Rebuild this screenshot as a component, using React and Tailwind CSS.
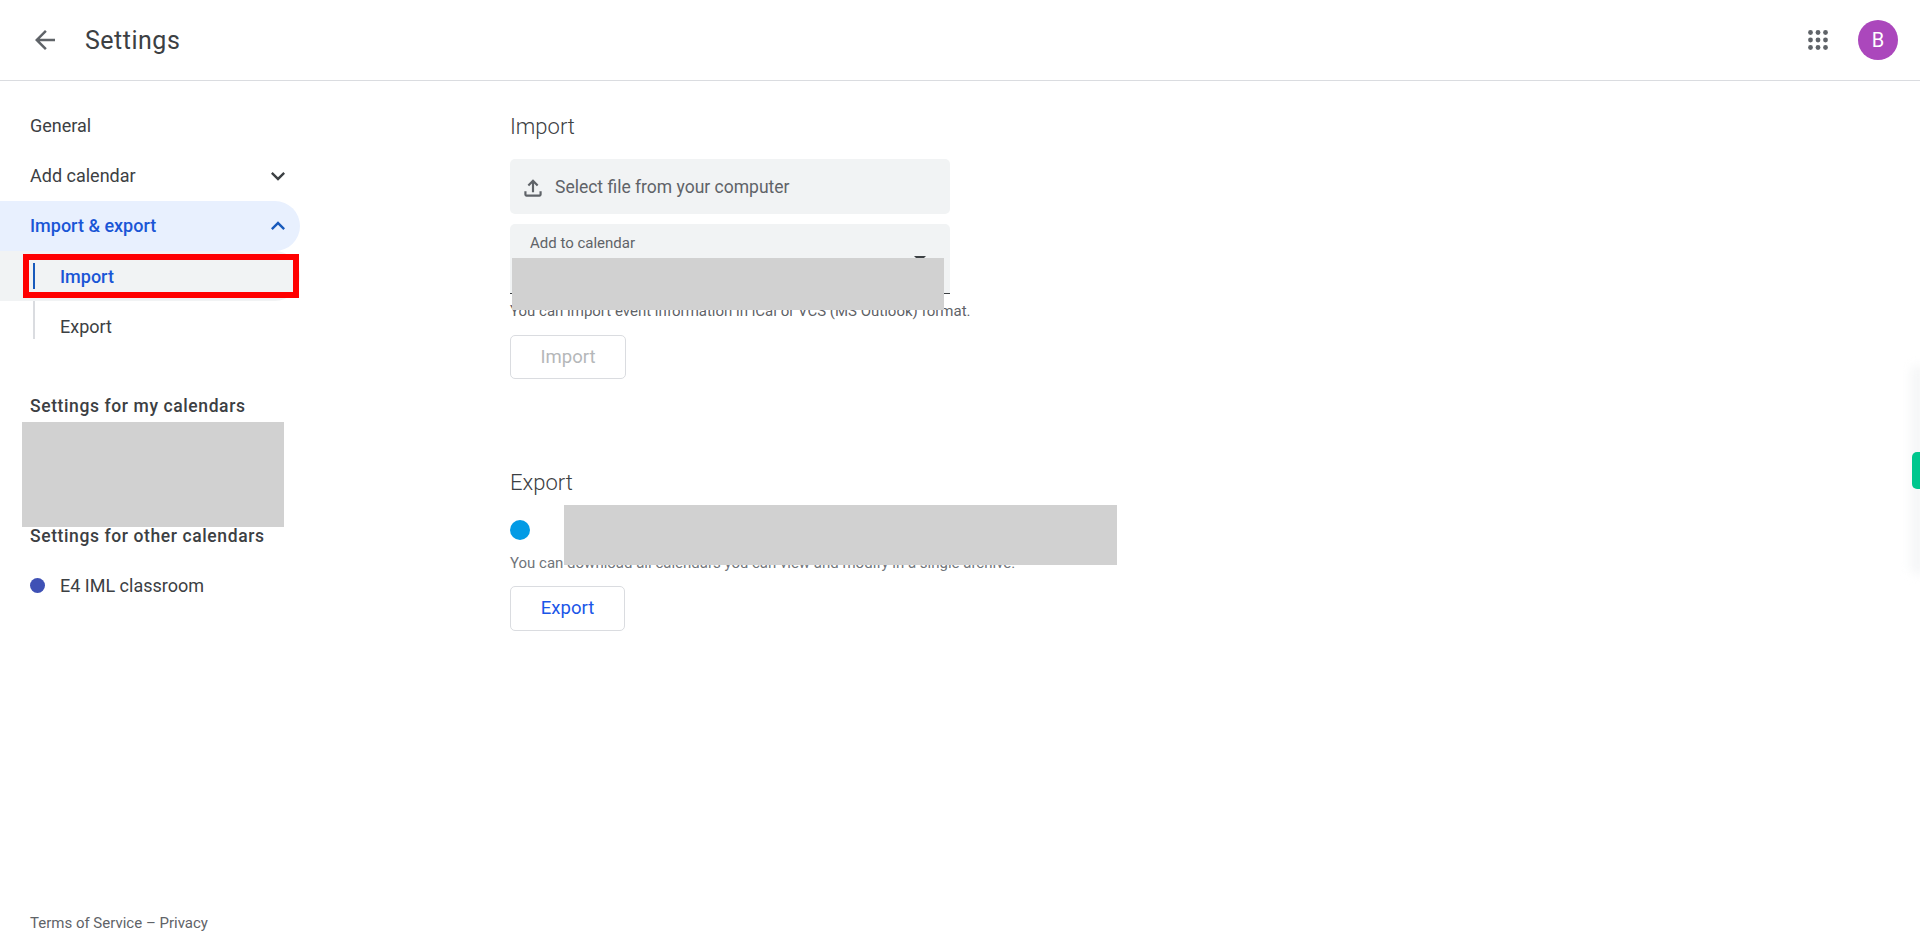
const ROBOTO = "font-['Roboto',sans-serif]";

function Chevron({ up }) {
  return (
    <svg viewBox="0 0 24 24" className={up ? 'w-7 h-7 fill-[#185abc] rotate-180' : 'w-7 h-7 fill-[#3c4043]'}>
      <path d="M7.41 8.59 12 13.17l4.59-4.58L18 10l-6 6-6-6z" />
    </svg>
  );
}

function AppsIcon() {
  const pos = [2.5, 10, 17.5];
  return (
    <svg viewBox="0 0 20 20" className="w-5 h-5 fill-[#5f6368]">
      {pos.map((y) => pos.map((x) => <circle key={x + '-' + y} cx={x} cy={y} r="2.4" />))}
    </svg>
  );
}

function Sidebar() {
  return (
    <aside className="w-[300px] shrink-0 pt-5 flex flex-col text-[18px] text-[#3c4043]">
      <div className="h-[50px] pl-[30px] pb-[2px] flex items-center">General</div>
      <div className="h-[50px] pl-[30px] pr-[8px] flex items-center justify-between">
        <span className="pb-[2px]">Add calendar</span>
        <Chevron />
      </div>
      <div className="h-[50px] pl-[30px] pr-[8px] flex items-center justify-between bg-[#e8f0fe] rounded-r-[25px] text-[#1a56d6] font-medium">
        <span className="pb-[2px]">Import &amp; export</span>
        <Chevron up />
      </div>
      <div className="h-[50px] pl-[60px] flex items-center bg-[#f1f3f4] rounded-r-[25px] text-[#1a56d6] font-medium relative">
        <span>Import</span>
        <div className="absolute left-[33px] top-[12px] w-[2px] h-[26px] bg-[#185abc]" />
      </div>
      <div className="h-[50px] pl-[60px] flex items-center relative">
        <span>Export</span>
        <div className="absolute left-[33px] top-0 w-[2px] h-[38px] bg-[#dadce0]" />
      </div>
      <div className="h-[50px] mt-[30px] pl-[30px] flex items-center text-[17.5px] font-medium tracking-[0.6px]">Settings for my calendars</div>
      <div className="h-[80px]" />
      <div className="h-[50px] pl-[30px] flex items-center text-[17.5px] font-medium tracking-[0.6px]">Settings for other calendars</div>
      <div className="h-[50px] pl-[30px] pb-[1px] flex items-center gap-[15px]">
        <span className="w-[15px] h-[15px] rounded-full bg-[#3f51b5]" />
        <span>E4 IML classroom</span>
      </div>
    </aside>
  );
}

function Main() {
  return (
    <main className="pl-[210px] pt-[26px] flex flex-col items-start">
      <h2 className="h-[40px] flex items-center text-[22px] font-light text-[#3c4043] leading-none">Import</h2>
      <div className="mt-[12px] w-[440px] h-[55px] pt-[2px] bg-[#f1f3f4] rounded-[5px] flex items-center pl-[10px] gap-[9px] text-[#5f6368] text-[17.5px]">
        <svg viewBox="0 0 24 24" className="w-[26px] h-[26px] fill-[#5f6368]">
          <path d="M18 15v3H6v-3H4v3c0 1.1.9 2 2 2h12c1.1 0 2-.9 2-2v-3h-2zM7 9l1.41 1.41L11 7.83V16h2V7.83l2.59 2.58L17 9l-5-5-5 5z" />
        </svg>
        <span>Select file from your computer</span>
      </div>
      <div className="mt-[10px] w-[440px] h-[70px] bg-[#f1f3f4] rounded-t-[5px] border-b border-[#3c4043] pl-5 pr-6 pt-[10px] flex justify-between text-[#5f6368] text-[15px]">
        <span className="leading-[18px]">Add to calendar</span>
        <span className="mt-[22px] w-0 h-0 border-x-[6px] border-x-transparent border-t-[6px] border-t-[#3c4043]" />
      </div>
      <p className="mt-[8px] text-[15px] leading-[18px] text-[#5f6368]">You can import event information in iCal or VCS (MS Outlook) format.</p>
      <button className="mt-[15px] w-[116px] h-[44px] pt-[2px] bg-white border border-[#dadce0] rounded-[5px] text-[18.5px] text-[#b5b7b9]">Import</button>

      <h2 className="mt-[84px] h-[40px] flex items-center text-[22px] font-light text-[#3c4043] leading-none">Export</h2>
      <div className="mt-[17px] h-[20px] w-5 rounded-full bg-[#039be5]" />
      <p className="mt-[14px] text-[15px] leading-[18px] text-[#70757a]">You can download all calendars you can view and modify in a single archive.</p>
      <button className="mt-[14px] w-[115px] h-[45px] bg-white border border-[#dadce0] rounded-[5px] text-[18.5px] text-[#1a56e8]">Export</button>
    </main>
  );
}

export default function App() {
  return (
    <div className={`${ROBOTO} relative h-[942px] w-full overflow-hidden bg-white flex flex-col`}>
      <header className="h-[81px] shrink-0 border-b border-[#dadce0] flex items-center pl-[30px] pr-[22px]">
        <svg viewBox="0 0 24 24" className="w-[30px] h-[30px] fill-[#5f6368]">
          <path d="M20 11H7.83l5.59-5.59L12 4l-8 8 8 8 1.41-1.41L7.83 13H20v-2z" />
        </svg>
        <h1 className="ml-[25px] pt-[2px] text-[25px] text-[#3c4043] tracking-[0.5px]">Settings</h1>
        <div className="ml-auto flex items-center gap-[30px]">
          <AppsIcon />
          <div className="w-10 h-10 rounded-full bg-[#ab47bc] text-white text-[20px] flex items-center justify-center">B</div>
        </div>
      </header>

      <div className="flex flex-1">
        <Sidebar />
        <Main />
      </div>

      <footer className="absolute left-[30px] top-[914px] text-[15px] leading-[18px] text-[#5f6368]">Terms of Service – Privacy</footer>

      {/* annotation and redaction layers painted over the screenshot */}
      <div className="absolute left-[23px] top-[254px] w-[276px] h-[44px] border-[6px] border-[#ff0000]" />
      <div className="absolute left-[22px] top-[422px] w-[262px] h-[105px] bg-[#d1d1d1]" />
      <div className="absolute left-[512px] top-[258px] w-[432px] h-[52px] bg-[#d1d1d1]" />
      <div className="absolute left-[564px] top-[505px] w-[553px] h-[60px] bg-[#d1d1d1]" />
      <div className="absolute right-[-6px] top-[365px] w-[16px] h-[210px] rounded-full bg-[#f6f7f8] blur-[5px]" />
      <div className="absolute right-0 top-[452px] w-[8px] h-[37px] rounded-l-[5px] bg-[#00c78e]" />
    </div>
  );
}
